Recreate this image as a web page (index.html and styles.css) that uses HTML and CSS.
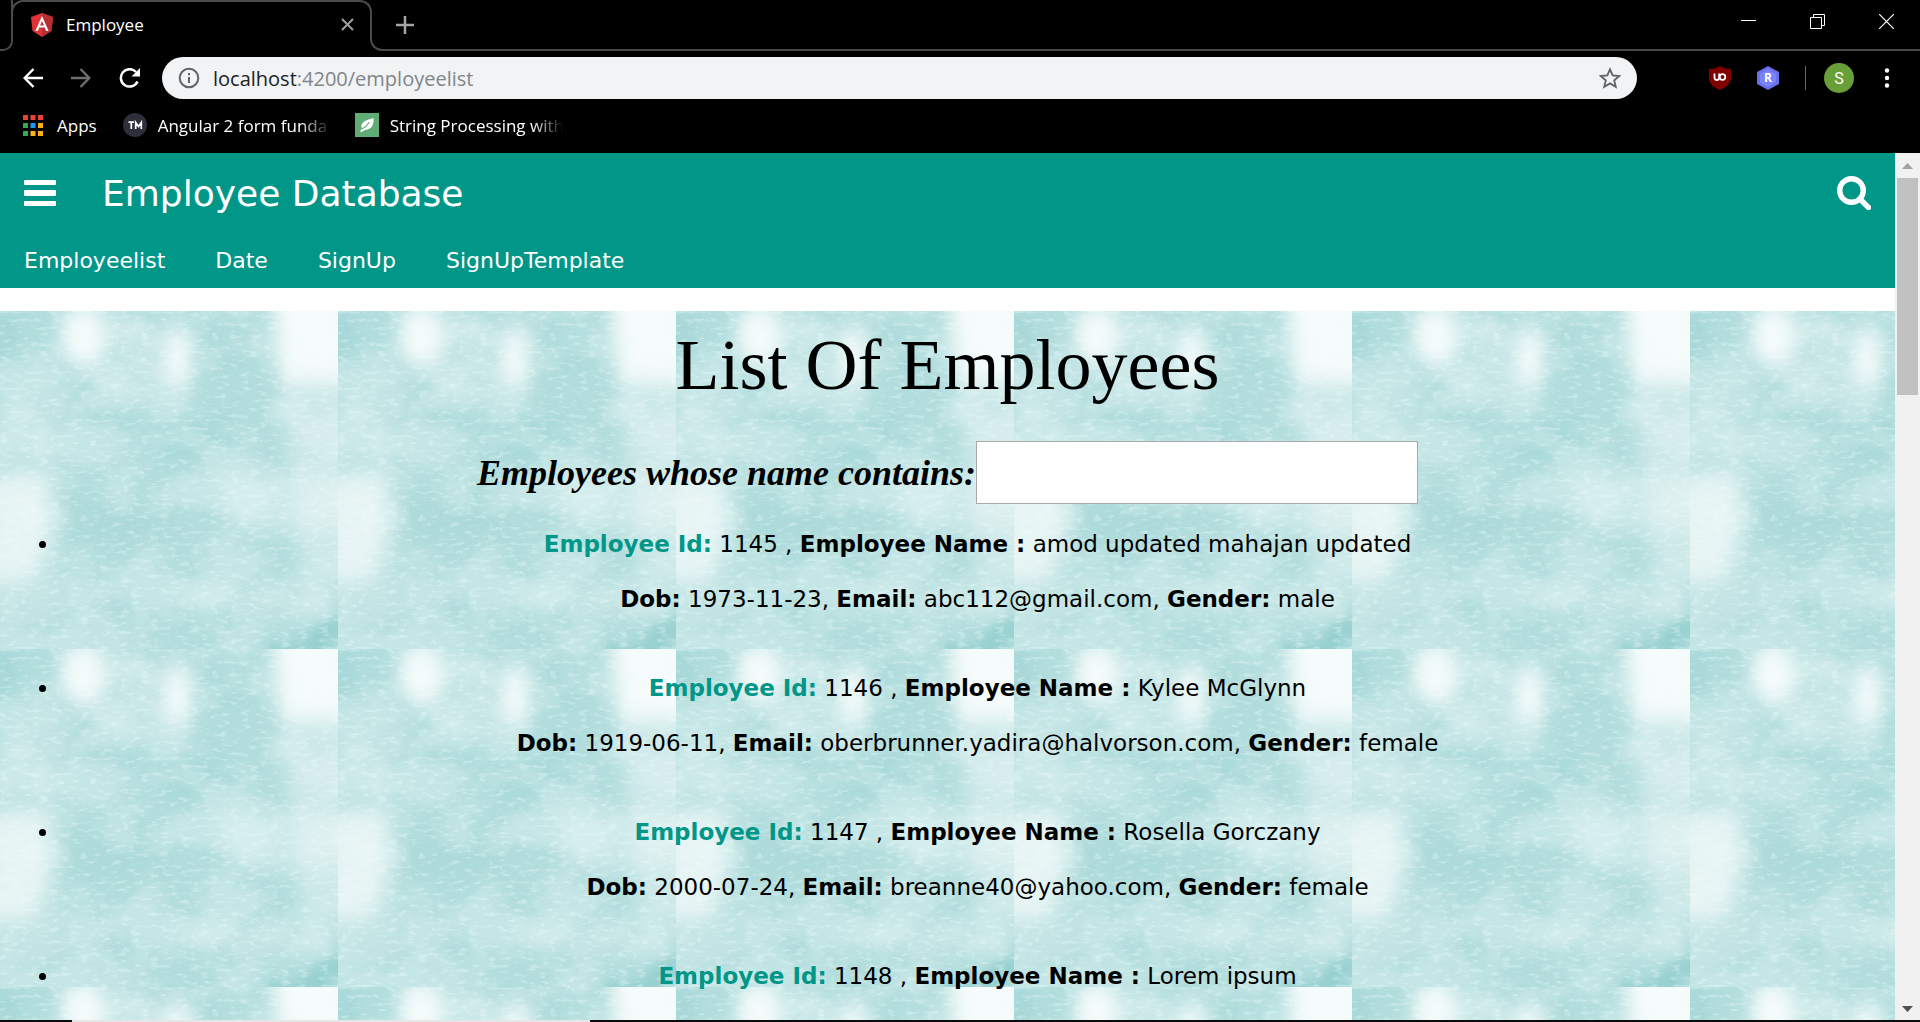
FILE: index.html
```html
<!DOCTYPE html>
<html lang="en">
<head>
<meta charset="utf-8">
<title>Employee</title>
<link rel="stylesheet" href="styles.css">
</head>
<body>
<header class="browser">
  <div class="tabstrip">
    <div class="strip-edge"></div>
    <div class="tab">
      <svg width="24" height="26" viewBox="0 0 24 26"><path d="M12 1 23 5 21.500 19 12 25 2.500 19 1 5Z" fill="#e23237"/><path d="M12 1 23 5 21.500 19 12 25Z" fill="#b52e31"/><path d="M12 4 5.300 19h2.600l1.400-3.400h5.400l1.400 3.400h2.600Zm0 5 2 4.500h-4Z" fill="#fff"/></svg>
      <span class="tab-title">Employee</span>
      <button class="icon-button" aria-label="Close tab"><svg width="13" height="13" viewBox="0 0 13 13" stroke="#a0a0a0" stroke-width="2"><path d="M1 1 12 12M12 1 1 12"/></svg></button>
    </div>
    <div class="strip-rest">
      <button class="icon-button" aria-label="New tab"><svg width="18" height="18" viewBox="0 0 18 18" stroke="#a6a6a6" stroke-width="2.500"><path d="M9 0V18M0 9H18"/></svg></button>
      <div class="window-buttons">
        <button class="icon-button" aria-label="Minimize"><svg width="15" height="15" viewBox="0 0 15 15"><path d="M0 6.500H15" stroke="#fff"/></svg></button>
        <button class="icon-button" aria-label="Restore"><svg width="15" height="15" viewBox="0 0 15 15" fill="none" stroke="#fff"><path d="M.5 3.500h11v11H.5ZM3.500 3.500V.5h11v11h-3"/></svg></button>
        <button class="icon-button" aria-label="Close"><svg width="15" height="15" viewBox="0 0 15 15" stroke="#fff" stroke-width="1.200"><path d="M0 0 15 15M15 0 0 15"/></svg></button>
      </div>
    </div>
  </div>
  <div class="toolbar">
    <div class="nav-buttons">
      <button class="icon-button" aria-label="Back"><svg width="20" height="20" viewBox="0 0 20 20" fill="none" stroke="#fff" stroke-width="2.400"><path d="M20 10H2M10.500 1 1.700 10l8.800 9"/></svg></button>
      <button class="icon-button" aria-label="Forward"><svg width="20" height="20" viewBox="0 0 20 20" fill="none" stroke="#6e6e6e" stroke-width="2.400"><path d="M0 10H18M9.500 1 18.300 10l-8.800 9"/></svg></button>
      <button class="icon-button" aria-label="Reload"><svg width="22" height="20" viewBox="0 0 22 20"><path d="M18.500 13.500A8.700 8.700 0 1 1 17 4" fill="none" stroke="#fff" stroke-width="2.500"/><path d="M21 0V8.500H12.500Z" fill="#fff"/></svg></button>
    </div>
    <div class="address">
      <svg width="22" height="22" viewBox="0 0 22 22"><circle cx="11" cy="11" r="9.300" fill="none" stroke="#5f6368" stroke-width="2"/><path d="M11 10v6M11 6v2.300" stroke="#5f6368" stroke-width="2"/></svg>
      <span class="url">localhost<span class="url-path">:4200/employeelist</span></span>
      <button class="icon-button" aria-label="Bookmark this page"><svg width="22" height="22" viewBox="0 0 24 24"><path d="M12 2.500l2.900 6.700 7.200.6-5.500 4.800 1.700 7.100-6.300-3.800-6.300 3.800 1.700-7.100L1.900 9.800l7.200-.6Z" fill="none" stroke="#5f6368" stroke-width="2"/></svg></button>
    </div>
    <div class="extensions">
      <svg width="22" height="24" viewBox="0 0 22 24"><path d="M11 0c3 2 6.500 3 11 3v8c0 6.500-4 10-11 13C4 21 0 17.500 0 11V3c4.500 0 8-1 11-3Z" fill="#800000"/><path d="M5.500 7.500v4.200a2 2 0 0 0 4.600 0V7.500" fill="none" stroke="#fff" stroke-width="1.800"/><circle cx="13.500" cy="11" r="2.800" fill="none" stroke="#fff" stroke-width="1.800"/></svg>
      <svg width="22" height="24" viewBox="0 0 22 24"><path d="M11 0 22 6V18L11 24 0 18V6Z" fill="#6770ea"/><path d="M11 3 19 7.500v9L11 21 3 16.500v-9Z" fill="#7a83f8"/><text x="11" y="16" class="ext-letter">R</text></svg>
      <span class="divider"></span>
      <button class="avatar" aria-label="Profile">S</button>
      <button class="icon-button" aria-label="Menu"><svg width="6" height="20" viewBox="0 0 6 20" fill="#fff"><circle cx="3" cy="2.500" r="2.200"/><circle cx="3" cy="10" r="2.200"/><circle cx="3" cy="17.500" r="2.200"/></svg></button>
    </div>
  </div>
  <nav class="bookmarks" aria-label="Bookmarks">
    <a href="#" class="bookmark apps"><svg width="20" height="21" viewBox="0 0 20 21"><path d="M0 0h5v5H0zM7.500 0h5v5h-5zM15 0h5v5h-5z" fill="#ea4335"/><path d="M0 8h5v5H0zM0 16h5v5H0z" fill="#34a853"/><path d="M7.500 8h5v5h-5z" fill="#2196f3"/><path d="M15 8h5v5h-5zM7.500 16h5v5h-5zM15 16h5v5h-5z" fill="#fbb01a"/></svg>Apps</a>
    <a href="#" class="bookmark"><svg width="24" height="24" viewBox="0 0 24 24"><circle cx="12" cy="12" r="12" fill="#2d303a"/><path d="M5.500 9.200h5.500M8.300 9.200V16M12.700 16V9.500l2.800 4 2.800-4V16" fill="none" stroke="#fff" stroke-width="1.700"/></svg><span class="faded">Angular 2 form funda</span></a>
    <a href="#" class="bookmark"><svg width="24" height="24" viewBox="0 0 24 24"><path d="M0 0h24v24H0z" fill="#5fad74"/><path d="M18.500 5c.6 7-2 11.500-8 11.700L6.500 19 5 18.500l2-3C4.500 9.500 10 7.500 18.500 5Z" fill="#fff"/><path d="M7 16c3-1.500 5-3.500 7.500-7" stroke="#5fad74" stroke-width="1.200" fill="none"/></svg><span class="faded">String Processing with</span></a>
  </nav>
</header>

<div class="viewport">
  <div class="page">
    <div class="app-bar">
      <div class="brand-row">
        <button class="icon-button" aria-label="Open menu"><svg width="32" height="26" viewBox="0 0 32 26" fill="#fff"><rect width="32" height="5" rx="1"/><rect y="10" width="32" height="6" rx="1"/><rect y="21" width="32" height="5" rx="1"/></svg></button>
        <span class="brand">Employee Database</span>
        <button class="icon-button" aria-label="Search"><svg width="34" height="34" viewBox="0 0 34 34" fill="none" stroke="#fff"><circle cx="14.500" cy="14.500" r="11.800" stroke-width="5.400"/><path d="m23 23 8.500 8.500" stroke-width="5.400" stroke-linecap="round"/></svg></button>
      </div>
      <nav class="app-nav">
        <a href="#">Employeelist</a>
        <a href="#">Date</a>
        <a href="#">SignUp</a>
        <a href="#">SignUpTemplate</a>
      </nav>
    </div>
    <main class="employees">
      <h1>List Of Employees</h1>
      <div class="filter">
        <label for="name-filter">Employees whose name contains:</label>
        <input id="name-filter" type="text">
      </div>
      <ul>
        <li>
          <p><b class="id">Employee Id:</b> 1145 , <b>Employee Name :</b> amod updated mahajan updated</p>
          <p><b>Dob:</b> 1973-11-23, <b>Email:</b> abc112@gmail.com, <b>Gender:</b> male</p>
        </li>
        <li>
          <p><b class="id">Employee Id:</b> 1146 , <b>Employee Name :</b> Kylee McGlynn</p>
          <p><b>Dob:</b> 1919-06-11, <b>Email:</b> oberbrunner.yadira@halvorson.com, <b>Gender:</b> female</p>
        </li>
        <li>
          <p><b class="id">Employee Id:</b> 1147 , <b>Employee Name :</b> Rosella Gorczany</p>
          <p><b>Dob:</b> 2000-07-24, <b>Email:</b> breanne40@yahoo.com, <b>Gender:</b> female</p>
        </li>
        <li>
          <p><b class="id">Employee Id:</b> 1148 , <b>Employee Name :</b> Lorem ipsum</p>
        </li>
      </ul>
    </main>
  </div>
  <div class="scrollbar" aria-hidden="true">
    <svg width="11" height="6" viewBox="0 0 11 6"><path d="M5.500 0 11 6H0Z" fill="#a3a3a3"/></svg>
    <span class="thumb"></span>
    <svg width="11" height="6" viewBox="0 0 11 6"><path d="M5.500 6 11 0H0Z" fill="#505050"/></svg>
  </div>
</div>
<div class="taskbar"><span></span></div>
</body>
</html>
```
FILE: styles.css
```css
* { box-sizing: border-box; }
body {
  margin: 0;
  height: 100vh;
  display: flex;
  flex-direction: column;
  overflow: hidden;
  background: #000;
  font-family: Verdana, "DejaVu Sans", sans-serif;
}
svg { display: block; flex: none; }
a { color: inherit; text-decoration: none; }
.icon-button {
  padding: 0;
  border: 0;
  background: none;
  flex: none;
}

/* Browser window */
.browser {
  flex: none;
  padding-bottom: 8px;
  color: #fff;
  font: 17px "Open Sans", "Noto Sans", sans-serif;
}
.tabstrip { display: flex; height: 51px; }
.strip-edge {
  width: 13px;
  border: solid #4a4a4a;
  border-width: 0 2px 2px 0;
  border-bottom-right-radius: 10px;
}
.tab {
  width: 361px;
  height: 41px;
  margin-left: -2px;
  padding: 6px 16px 0 17px;
  display: flex;
  align-items: center;
  gap: 12px;
  border-top: 2px solid #4a4a4a;
  border-left: 2px solid #4a4a4a;
  border-right: 2px solid #4a4a4a;
  border-radius: 12px 12px 0 0;
}
.tab-title { flex: 1; }
.strip-rest {
  flex: 1;
  margin: 10px 0 0 -2px;
  padding: 0 26px 10px 24px;
  display: flex;
  justify-content: space-between;
  align-items: center;
  border: solid #4a4a4a;
  border-width: 0 0 2px 2px;
  border-bottom-left-radius: 12px;
}
.window-buttons {
  display: flex;
  gap: 54px;
  padding-bottom: 7px;
}
.toolbar {
  display: flex;
  align-items: center;
  height: 54px;
  padding: 0 30px 0 23px;
}
.nav-buttons {
  display: flex;
  gap: 28px;
  width: 139px;
}
.address {
  flex: 1;
  height: 42px;
  padding: 0 16px;
  display: flex;
  align-items: center;
  gap: 13px;
  border-radius: 21px;
  background: #f1f3f4;
  color: #202124;
  font-size: 20px;
}
.url { flex: 1; }
.url-path { color: #80868b; }
.extensions {
  width: 253px;
  display: flex;
  align-items: center;
  justify-content: flex-end;
  gap: 26px;
}
.ext-letter {
  font: bold 12px "Open Sans", sans-serif;
  fill: #fff;
  text-anchor: middle;
}
.divider { width: 1px; height: 24px; background: #666; }
.avatar {
  width: 30px;
  height: 30px;
  margin: 0 4px 0 -8px;
  padding: 0;
  border: 0;
  border-radius: 50%;
  background: #689f38;
  color: #fff;
  font: 16px Roboto, sans-serif;
}
.bookmarks {
  display: flex;
  align-items: center;
  height: 40px;
  padding-left: 23px;
  gap: 20px;
}
.bookmark {
  display: flex;
  align-items: center;
  gap: 11px;
}
.apps { gap: 14px; padding-right: 6px; }
.faded {
  width: 177px;
  overflow: hidden;
  white-space: nowrap;
  -webkit-mask-image: linear-gradient(90deg, #000 80%, transparent 98%);
  mask-image: linear-gradient(90deg, #000 80%, transparent 98%);
}

/* Page area beside its scrollbar */
.viewport {
  flex: 1;
  min-height: 0;
  display: flex;
  background: #fff;
}
.page { flex: 1; overflow: hidden; }
.scrollbar {
  width: 25px;
  padding: 10px 2px 8px;
  display: flex;
  flex-direction: column;
  align-items: center;
  background: #f1f1f1;
}
.thumb {
  width: 21px;
  height: 217px;
  margin: 9px 0 auto;
  background: #c1c1c1;
}

/* Employee database */
.app-bar {
  margin-bottom: 23px;
  background: #009688;
  color: #fff;
  font-size: 22px;
}
.brand-row {
  display: flex;
  align-items: center;
  height: 80px;
  padding: 0 24px;
  gap: 46px;
}
.brand { flex: 1; font-size: 36px; }
.app-nav {
  display: flex;
  align-items: center;
  height: 55px;
  padding: 0 24px;
  gap: 50px;
}
.employees {
  padding-bottom: 400px;
  background-color: #bde1e1;
  background-size: 338px 338px;
  background-image: url("data:image/svg+xml,%3Csvg xmlns='http://www.w3.org/2000/svg' width='338' height='338' viewBox='0 0 338 338'%3E%3Cdefs%3E%3Cfilter id='b' x='-50%25' y='-50%25' width='200%25' height='200%25'%3E%3CfeGaussianBlur stdDeviation='9'/%3E%3C/filter%3E%3Cfilter id='n' x='0' y='0' width='100%25' height='100%25' color-interpolation-filters='sRGB'%3E%3CfeTurbulence type='fractalNoise' baseFrequency='.1 .25' numOctaves='4' seed='5'/%3E%3CfeColorMatrix values='0 0 0 0 .95 0 0 0 0 1 0 0 0 0 1 5 0 0 0 -2.7'/%3E%3C/filter%3E%3Cfilter id='d' x='0' y='0' width='100%25' height='100%25' color-interpolation-filters='sRGB'%3E%3CfeTurbulence type='fractalNoise' baseFrequency='.015 .02' numOctaves='5' seed='9'/%3E%3CfeColorMatrix values='0 0 0 0 .92 0 0 0 0 .97 0 0 0 0 .97 4 0 0 0 -1.6'/%3E%3C/filter%3E%3C/defs%3E%3Cpath fill='%23b3dddd' d='M0 0h338v338H0z'/%3E%3Cg filter='url(%23b)'%3E%3Cg fill='%23f6fbfb'%3E%3Cellipse cx='83' cy='25' rx='22' ry='30'/%3E%3Cellipse cx='178' cy='48' rx='13' ry='28'/%3E%3Cpath d='M272-20h90v90h-82z'/%3E%3Cpath d='M-20 165h68v65l-15 40H-20z' opacity='.7'/%3E%3Cpath d='M210 165h148v55H240z' opacity='.35'/%3E%3Cpath d='M280 70h80v190h-60z' opacity='.4'/%3E%3Cpath d='M90 10h100v75H90z' opacity='.25'/%3E%3Cpath d='M0 80h60v230H0z' opacity='.25'/%3E%3Cpath d='M175 275h163v25H190z' opacity='.25'/%3E%3C/g%3E%3Cg fill='%2396cfcf'%3E%3Cpath d='M265 305h100v50H245z' opacity='.9'/%3E%3Cpath d='M100 100h130v50H110z' opacity='.3'/%3E%3Cpath d='M65 190h100v40H65z' opacity='.25'/%3E%3Cpath d='M-10 0h30v60h-30z' opacity='.4'/%3E%3Cpath d='M220 0h25v60h-25z' opacity='.3'/%3E%3C/g%3E%3C/g%3E%3Cpath filter='url(%23d)' opacity='.32' d='M0 0h338v338H0z'/%3E%3Cpath filter='url(%23n)' opacity='.3' d='M0 0h338v338H0z'/%3E%3C/svg%3E");
  font-size: 23px;
  line-height: 33px;
  text-align: center;
}
h1 {
  margin: 0 0 22px;
  font: 72px/108px "Times New Roman", "Liberation Serif", serif;
}
.filter {
  display: flex;
  justify-content: center;
  align-items: center;
}
.filter label {
  font: italic bold 36px "Times New Roman", "Liberation Serif", serif;
}
.filter input {
  width: 442px;
  height: 63px;
  padding: 8px;
  border: 1px solid #a9a9a9;
  background: #fff;
  font-size: 22px;
}
ul { margin: 24px 0 0; padding: 0 0 0 60px; }
li { margin-bottom: 56px; }
p { margin: 0 0 22px; }
p:last-child { margin: 0; }
.id { color: #009688; }

.taskbar { flex: none; height: 2px; background: #0b0b0b; }
.taskbar span {
  display: block;
  width: 27%;
  height: 2px;
  margin-left: 72px;
  background: #e6e6e6;
}
```
